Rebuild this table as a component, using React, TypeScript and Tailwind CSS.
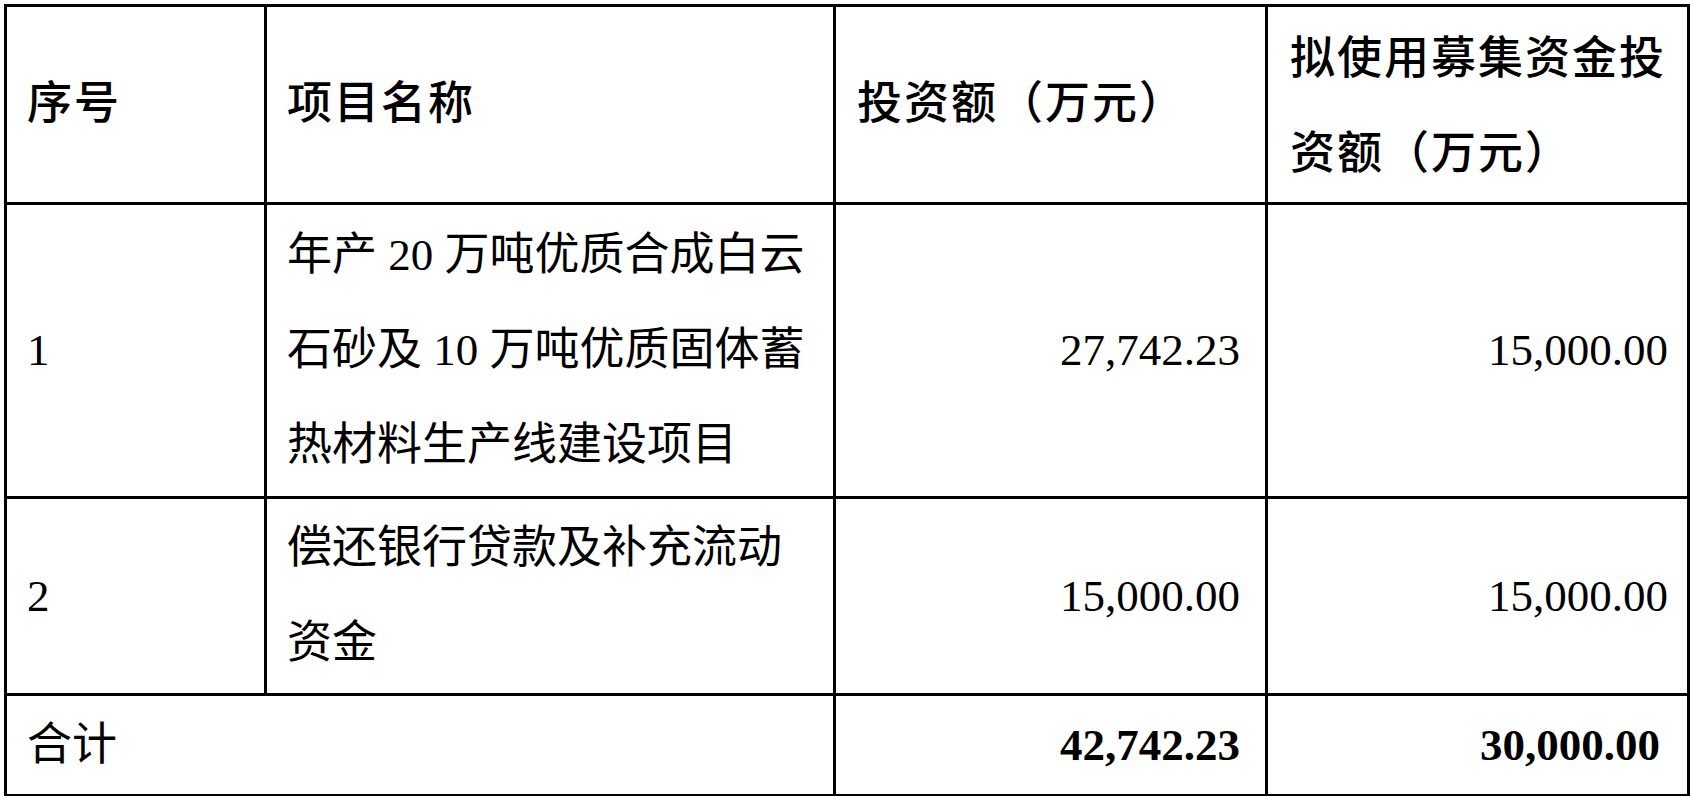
import React from 'react';

// 募集资金投资项目表
const rows = [
  {
    no: '1',
    name: ['年产 20 万吨优质合成白云', '石砂及 10 万吨优质固体蓄', '热材料生产线建设项目'],
    invest: '27,742.23',
    raise: '15,000.00',
    h: 'h-[294px]',
  },
  {
    no: '2',
    name: ['偿还银行贷款及补充流动', '资金'],
    invest: '15,000.00',
    raise: '15,000.00',
    h: 'h-[197px]',
  },
];

const cell = 'border-[3px] border-black align-middle';

export default function App() {
  return (
    <div className="w-[1694px] h-[796px] bg-white pl-[4px] pt-[4px]">
      <table
        className="table-fixed border-collapse w-[1683px] text-black text-[45px] leading-[95px]"
        style={{ fontFamily: '"Liberation Serif", "Noto Sans CJK SC", serif' }}
      >
        <colgroup>
          <col className="w-[260px]" />
          <col className="w-[569px]" />
          <col className="w-[432px]" />
          <col className="w-[422px]" />
        </colgroup>
        <tbody>
          {/* 表头 */}
          <tr className="h-[198px] font-medium tracking-[2px]">
            <td className={`${cell} pl-[20px]`}>序号</td>
            <td className={`${cell} pl-[20px]`}>项目名称</td>
            <td className={`${cell} pl-[21px]`}>投资额（万元）</td>
            <td className={`${cell} pl-[22px] pt-[4px] whitespace-nowrap`}>
              拟使用募集资金投
              <br />
              资额（万元）
            </td>
          </tr>

          {rows.map((r) => (
            <tr key={r.no} className={r.h}>
              <td className={`${cell} pl-[20px]`}>{r.no}</td>
              <td className={`${cell} pl-[20px] whitespace-nowrap`}>
                {r.name.map((line, i) => (
                  <React.Fragment key={i}>
                    {i > 0 && <br />}
                    {line}
                  </React.Fragment>
                ))}
              </td>
              <td className={`${cell} pr-[25px] text-right`}>{r.invest}</td>
              <td className={`${cell} pr-[19px] text-right`}>{r.raise}</td>
            </tr>
          ))}

          {/* 合计 */}
          <tr className="h-[101px]">
            <td colSpan={2} className={`${cell} pl-[20px]`}>合计</td>
            <td className={`${cell} pr-[25px] text-right font-bold`}>42,742.23</td>
            <td className={`${cell} pr-[27px] text-right font-bold`}>30,000.00</td>
          </tr>
        </tbody>
      </table>
    </div>
  );
}
